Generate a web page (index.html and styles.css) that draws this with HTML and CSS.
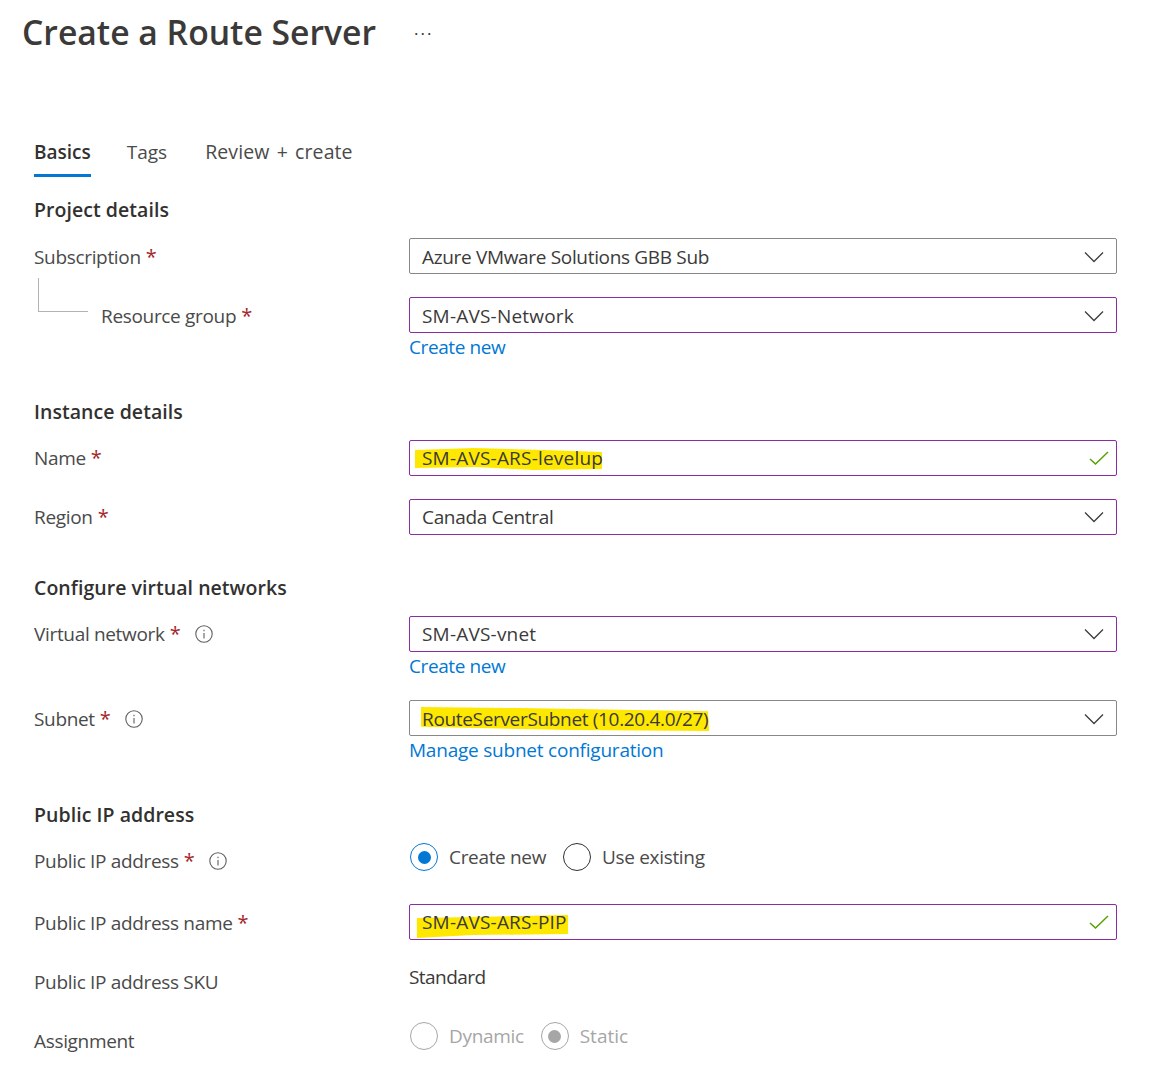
FILE: index.html
```html
<!DOCTYPE html>
<html lang="en">
<head>
<meta charset="utf-8">
<title>Create a Route Server</title>
<link rel="stylesheet" href="styles.css">
</head>
<body>
<header class="title-bar">
  <h1 class="title">Create a Route Server</h1>
  <span class="more">···</span>
</header>
<main class="page">
  <nav class="tabs">
    <a class="tab tab-active">Basics</a>
    <a class="tab">Tags</a>
    <a class="tab tab-wide">Review + create</a>
  </nav>

  <h2 class="heading heading-first">Project details</h2>
  <div class="row">
    <div class="label"><span>Subscription</span><span class="req">*</span></div>
    <div class="input neutral"><span class="value">Azure VMware Solutions GBB Sub</span>
      <svg class="chev" viewBox="0 0 20 12"><path d="M1 1.5 10 10.5 19 1.5"/></svg></div>
  </div>
  <div class="row row-gap">
    <div class="label"><span class="tree"></span><span>Resource group</span><span class="req">*</span></div>
    <div>
      <div class="input"><span class="value caps">SM-AVS-Network</span>
        <svg class="chev" viewBox="0 0 20 12"><path d="M1 1.5 10 10.5 19 1.5"/></svg></div>
      <a class="link link-short">Create new</a>
    </div>
  </div>

  <h2 class="heading heading-after-link">Instance details</h2>
  <div class="row">
    <div class="label label-up"><span>Name</span><span class="req">*</span></div>
    <div class="input input-up">
      <svg class="marker marker-name" viewBox="0 0 190 24" preserveAspectRatio="none"><path d="M1 3 60 1 130 3 188 5 188 22 120 23 60 20 1 21Z"/></svg>
      <span class="value caps">SM-AVS-ARS-levelup</span>
      <svg class="check" viewBox="0 0 20 14"><path d="M1 8 6.5 13 19 1"/></svg></div>
  </div>
  <div class="row row-gap">
    <div class="label label-up"><span>Region</span><span class="req">*</span></div>
    <div class="input input-up"><span class="value">Canada Central</span>
      <svg class="chev" viewBox="0 0 20 12"><path d="M1 1.5 10 10.5 19 1.5"/></svg></div>
  </div>

  <h2 class="heading heading-after-input">Configure virtual networks</h2>
  <div class="row">
    <div class="label label-up"><span>Virtual network</span><span class="req">*</span>
      <svg class="info" viewBox="0 0 18 18"><circle cx="9" cy="9" r="8.2"/><path d="M9 8v5.500M9 4.800v1.400"/></svg></div>
    <div>
      <div class="input input-up"><span class="value caps">SM-AVS-vnet</span>
        <svg class="chev" viewBox="0 0 20 12"><path d="M1 1.5 10 10.5 19 1.5"/></svg></div>
      <a class="link link-short">Create new</a>
    </div>
  </div>
  <div class="row row-gap-link">
    <div class="label"><span>Subnet</span><span class="req">*</span>
      <svg class="info" viewBox="0 0 18 18"><circle cx="9" cy="9" r="8.2"/><path d="M9 8v5.500M9 4.800v1.400"/></svg></div>
    <div>
      <div class="input neutral">
        <svg class="marker marker-subnet" viewBox="0 0 290 24" preserveAspectRatio="none"><path d="M1 1 100 2 288 5 289 24 150 23 1 20Z"/></svg>
        <span class="value">RouteServerSubnet (10.20.4.0/27)</span>
        <svg class="chev" viewBox="0 0 20 12"><path d="M1 1.5 10 10.5 19 1.5"/></svg></div>
      <a class="link link-long">Manage subnet configuration</a>
    </div>
  </div>

  <h2 class="heading heading-after-link">Public IP address</h2>
  <div class="row row-short">
    <div class="label label-up"><span>Public IP address</span><span class="req">*</span>
      <svg class="info" viewBox="0 0 18 18"><circle cx="9" cy="9" r="8.2"/><path d="M9 8v5.500M9 4.800v1.400"/></svg></div>
    <div class="radios">
      <span class="radio radio-on"></span><span class="radio-text">Create new</span>
      <span class="radio radio-off"></span><span class="radio-text">Use existing</span>
    </div>
  </div>
  <div class="row row-after-radio">
    <div class="label"><span>Public IP address name</span><span class="req">*</span></div>
    <div class="input input-up">
      <svg class="marker marker-pip" viewBox="0 0 160 24" preserveAspectRatio="none"><path d="M3 4 60 3 158 1 158 20 60 21 3 24Z"/></svg>
      <span class="value caps">SM-AVS-ARS-PIP</span>
      <svg class="check" viewBox="0 0 20 14"><path d="M1 8 6.500 13 19 1"/></svg></div>
  </div>
  <div class="row row-gap row-short">
    <div class="label"><span>Public IP address SKU</span></div>
    <div class="static">Standard</div>
  </div>
  <div class="row row-last row-short">
    <div class="label"><span>Assignment</span></div>
    <div class="radios disabled">
      <span class="radio radio-dis"></span><span class="radio-text">Dynamic</span>
      <span class="radio radio-dis radio-dis-on"></span><span class="radio-text radio-text-wide">Static</span>
    </div>
  </div>
</main>
</body>
</html>
```
FILE: styles.css
```css
* { box-sizing: border-box; }
html, body { margin: 0; padding: 0; background: #fff; }
body {
  width: 1149px;
  height: 1086px;
  overflow: hidden;
  font-family: "Open Sans", "Noto Sans", sans-serif;
  font-size: 19px;
  letter-spacing: -0.33px;
  color: #3d3d3d;
}
.title-bar { display: flex; align-items: center; height: 66px; padding-left: 22px; }
.title { margin: 0; font-size: 33.700px; line-height: 64px; height: 66px; font-weight: 600; letter-spacing: 0; color: #3b3a39; width: 392px; white-space: nowrap; }
.more { font-size: 17px; letter-spacing: 2px; color: #323130; line-height: 1; }
.page { padding: 66px 32px 0 34px; }
.tabs { display: flex; gap: 36px; height: 45px; }
.tab { height: 45px; line-height: 40px; border-bottom: 3px solid transparent; color: #4a4a4a; white-space: nowrap; letter-spacing: 0; }
.tab-wide { margin-left: 2px; letter-spacing: 0.1px; word-spacing: 2px; font-size: 19.500px; }
.tab-active { font-weight: 600; color: #323130; border-bottom-color: #0078d4; }
.heading { margin: 0 0 14px; font-size: 19.500px; font-weight: 600; line-height: 28px; letter-spacing: 0.05px; color: #323130; }
.heading-first { margin-top: 19px; }
.heading-after-link { margin-top: 37px; }
.heading-after-input { margin-top: 39px; }
.row { display: grid; grid-template-columns: 375px 708px; align-items: start; }
.row-gap { margin-top: 23px; }
.row-gap-link { margin-top: 20px; }
.row-short { height: 28px; }
.row-after-radio { margin-top: 33px; }
.row-last { margin-top: 31px; }
.label { display: flex; align-items: center; height: 36px; padding-top: 2px; white-space: nowrap; color: #4a4a4a; }
.label-up { padding-top: 0; }
.req { color: #a4262c; margin-left: 5px; font-size: 20px; line-height: 1; }
.info { width: 18px; height: 18px; margin-left: 14.500px; fill: none; stroke: #605e5c; stroke-width: 1.100; }
.tree { width: 50px; height: 34px; margin: -21px 13px 0 4px; border-left: 1px solid #b3b3b3; border-bottom: 1px solid #b3b3b3; align-self: flex-start; }
.input { position: relative; display: flex; align-items: center; justify-content: space-between; height: 36px; padding: 1px 9px 0 12px; border: 1px solid #8a2da5; border-radius: 2px; background: #fff; }
.input-up { padding-top: 0; padding-bottom: 1px; }
.neutral { border-color: #8a8886; }
.value { position: relative; white-space: nowrap; color: #3b3a39; }
.caps { letter-spacing: 0.2px; }
.chev { width: 20px; height: 12px; margin-right: 3px; fill: none; stroke: #3d3d3d; stroke-width: 1.300; }
.check { width: 20px; height: 14px; margin-right: -2px; fill: none; stroke: #57a300; stroke-width: 1.500; }
.marker { position: absolute; fill: #ffe800; }
.marker-name { left: 4px; top: 6px; width: 190px; height: 24px; }
.marker-subnet { left: 10px; top: 5px; width: 290px; height: 25px; }
.marker-pip { left: 4px; top: 9px; width: 156px; height: 24px; }
.link { display: block; height: 28px; line-height: 28px; color: #0078d4; white-space: nowrap; }
.link-short { letter-spacing: -0.42px; }
.link-long { letter-spacing: -0.22px; }
.radios { display: flex; align-items: center; height: 28px; }
.radio { width: 28px; height: 28px; border-radius: 50%; border: 1px solid #323130; margin-left: 1px; flex: none; position: relative; }
.radio-text { margin-left: 11px; margin-right: 16px; white-space: nowrap; color: #4a4a4a; }
.radio-text-wide { letter-spacing: 0; }
.radio-on { border-color: #0078d4; display: flex; align-items: center; justify-content: center; }
.radio-on::after { content: ""; width: 13px; height: 13px; border-radius: 50%; background: #0078d4; }
.disabled .radio-text { color: #a6a6a6; }
.radio-dis { border-color: #a6a6a6; }
.radio-dis-on { display: flex; align-items: center; justify-content: center; }
.radio-dis-on::after { content: ""; width: 13px; height: 13px; border-radius: 50%; background: #a6a6a6; }
.static { height: 28px; line-height: 28px; color: #3b3a39; letter-spacing: -0.55px; }
```
